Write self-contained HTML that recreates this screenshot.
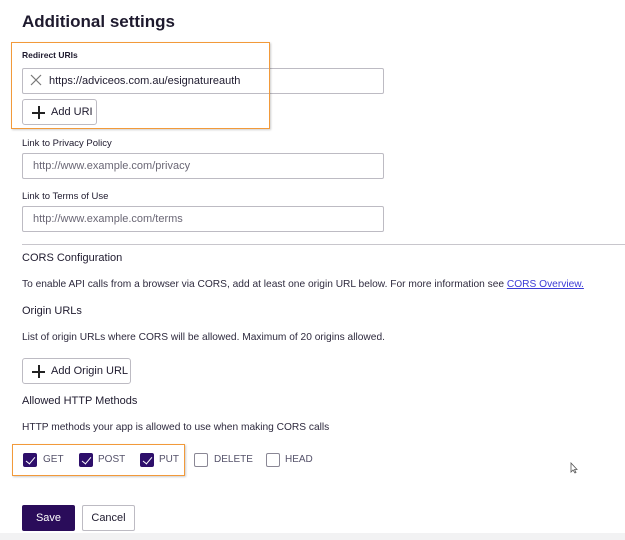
<!DOCTYPE html>
<html><head><style>
*{box-sizing:border-box;margin:0;padding:0}
body{width:625px;height:540px;background:#fff;font-family:"Liberation Sans",sans-serif;color:#1e1a2e;position:relative;overflow:hidden}
.a{position:absolute;white-space:nowrap}
.inp{position:absolute;left:22px;width:362px;height:26px;border:1px solid #bdbbc3;border-radius:2px;font-size:11px;color:#6a6775;padding:6px 10px;white-space:nowrap}
.btn{position:absolute;left:22px;height:26px;border:1px solid #bdbbc3;border-radius:3px;font-size:11px;color:#1e1a2e;padding:6px 0 0 28px;white-space:nowrap;background:#fff}
.btn:before{content:"";position:absolute;left:9px;top:12px;width:13px;height:1.5px;background:#222}
.btn:after{content:"";position:absolute;left:15px;top:6px;width:1.5px;height:13px;background:#222}
.lbl{font-size:9.5px;color:#1e1a2e}
.h{font-size:11px;color:#1e1a2e}
.t{font-size:10.2px;color:#2e2a3e}
.cb{position:absolute;top:453px;width:14px;height:14px;border-radius:2px}
.on{background:#2e0f6b;border:1px solid #2e0f6b}
.on:after{content:"";position:absolute;left:4px;top:1px;width:4px;height:8px;border:solid #fff;border-width:0 1.6px 1.6px 0;transform:rotate(40deg)}
.off{border:1px solid #8a8795;background:#fff}
.cl{position:absolute;top:454px;font-size:10px;color:#55526a}
</style></head><body>
<div class="a" style="left:22px;top:12px;font-size:17px;font-weight:bold;color:#1e1a2e">Additional settings</div>
<div class="a lbl" style="left:22px;top:50px;font-weight:bold;font-size:8.5px">Redirect URIs</div>
<div class="inp" style="top:68px;color:#1e1a2e;padding-left:26px">https://adviceos.com.au/esignatureauth</div>
<svg class="a" style="left:30px;top:74px" width="12" height="12"><path d="M1 1L11 11M11 1L1 11" stroke="#777" stroke-width="1.2"/></svg>
<div class="btn" style="top:99px;width:75px">Add URI</div>
<div class="a" style="left:11px;top:42px;width:259px;height:87px;border:1.5px solid #f29a3a;box-shadow:1px 1px 2px rgba(0,0,0,.2)"></div>
<div class="a lbl" style="left:22px;top:138px">Link to Privacy Policy</div>
<div class="inp" style="top:153px">http://www.example.com/privacy</div>
<div class="a lbl" style="left:22px;top:191px">Link to Terms of Use</div>
<div class="inp" style="top:206px">http://www.example.com/terms</div>
<div class="a" style="left:22px;top:244px;width:603px;height:1px;background:#c8c6cc"></div>
<div class="a h" style="left:22px;top:252px">CORS Configuration</div>
<div class="a t" style="left:22px;top:279px">To enable API calls from a browser via CORS, add at least one origin URL below. For more information see <span style="color:#3b3bd6;text-decoration:underline">CORS Overview.</span></div>
<div class="a h" style="left:22px;top:305px">Origin URLs</div>
<div class="a t" style="left:22px;top:332px">List of origin URLs where CORS will be allowed. Maximum of 20 origins allowed.</div>
<div class="btn" style="top:358px;width:109px">Add Origin URL</div>
<div class="a h" style="left:22px;top:395px">Allowed HTTP Methods</div>
<div class="a t" style="left:22px;top:422px">HTTP methods your app is allowed to use when making CORS calls</div>
<div class="a" style="left:12px;top:444px;width:173px;height:32px;border:1.5px solid #f29a3a;box-shadow:1px 1px 2px rgba(0,0,0,.2)"></div>
<div class="cb on" style="left:23px"></div><div class="cl" style="left:43px">GET</div>
<div class="cb on" style="left:79px"></div><div class="cl" style="left:98px">POST</div>
<div class="cb on" style="left:140px"></div><div class="cl" style="left:159px">PUT</div>
<div class="cb off" style="left:194px"></div><div class="cl" style="left:214px">DELETE</div>
<div class="cb off" style="left:266px"></div><div class="cl" style="left:285px">HEAD</div>
<svg class="a" style="left:570px;top:462px" width="8" height="12"><path d="M1 1L1 10L3 8L5 11L6 10.5L4.5 7.5L7 7.5Z" fill="#fff" stroke="#555" stroke-width=".8"/></svg>
<div class="a" style="left:22px;top:505px;width:53px;height:26px;background:#2a0c5a;border-radius:2px;color:#fff;font-size:11px;text-align:center;line-height:26px">Save</div>
<div class="a" style="left:82px;top:505px;width:53px;height:26px;border:1px solid #bdbbc3;border-radius:2px;color:#1e1a2e;font-size:11px;text-align:center;line-height:24px">Cancel</div>
<div class="a" style="left:0;top:533px;width:625px;height:7px;background:#f2f2f3"></div>
</body></html>
